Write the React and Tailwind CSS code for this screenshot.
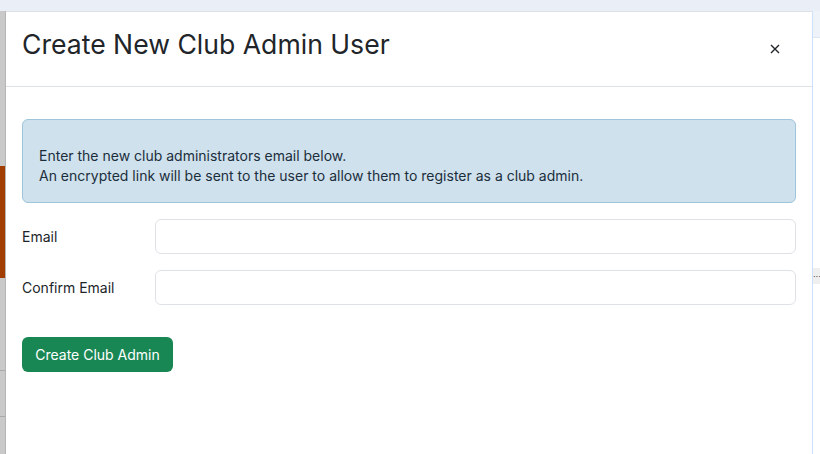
import React, { useState } from "react";

const CreateClubAdminModal = () => {
  const [email, setEmail] = useState("");
  const [confirmEmail, setConfirmEmail] = useState("");

  return (
    <div className="flex flex-col w-[820px] h-[454px] overflow-hidden bg-white font-['Inter','Liberation_Sans',sans-serif] text-[#212529]">
      {/* page behind the modal */}
      <div className="h-[11px] shrink-0 bg-[#e9eef7]" />

      <div className="flex flex-1 min-h-0">
        {/* left edge of the page */}
        <div className="flex flex-col w-[6px] shrink-0 bg-[#c9c9c9] border-r border-[#b5b5b5]">
          <div className="h-[155px] shrink-0" />
          <div className="h-[112px] shrink-0 bg-[#a23d02]" />
          <div className="h-[93px] shrink-0 border-b border-[#a9a9a9]" />
          <div className="h-[46px] shrink-0 border-b border-[#a9a9a9]" />
        </div>

        {/* Modal */}
        <div className="flex flex-col flex-1 bg-white border-t border-[#dee2e6]">
          <div className="flex items-center justify-between h-[75px] shrink-0 px-4 border-b border-[#dee2e6]">
            <h3 className="text-[26.6px] leading-[31px] mb-[10px] text-[#212529]">
              Create New Club Admin User
            </h3>
            <button className="flex items-center justify-center w-[20px] h-[20px] mr-[11px] text-[#212529]">
              <svg width="10" height="10" viewBox="0 0 10 10">
                <path d="M1 1 L9 9 M9 1 L1 9" stroke="currentColor" strokeWidth="1.4" />
              </svg>
            </button>
          </div>

          <div className="flex flex-col px-4 pt-[32px]">
            {/* Info box */}
            <div className="rounded-[6px] border border-[#9ec5da] bg-[#cfe1ec] px-4 pt-[26px] pb-[16px] text-[14px] leading-[20px] text-[#1b2e3c]">
              <p>Enter the new club administrators email below.</p>
              <p>An encrypted link will be sent to the user to allow them to register as a club admin.</p>
            </div>

            <div className="flex items-center mt-4">
              <label className="w-[133px] shrink-0 text-[14px]">Email</label>
              <input
                type="email"
                value={email}
                onChange={(e) => setEmail(e.target.value)}
                className="flex-1 h-[35px] rounded-[6px] border border-[#dee2e6] px-3 text-[14px] outline-none"
              />
            </div>

            <div className="flex items-center mt-4">
              <label className="w-[133px] shrink-0 text-[14px]">Confirm Email</label>
              <input
                type="email"
                value={confirmEmail}
                onChange={(e) => setConfirmEmail(e.target.value)}
                className="flex-1 h-[35px] rounded-[6px] border border-[#dee2e6] px-3 text-[14px] outline-none"
              />
            </div>

            <div className="mt-[32px]">
              <button className="h-[35px] w-[151px] rounded-[6px] bg-[#198754] text-white text-[14px]">
                Create Club Admin
              </button>
            </div>
          </div>
        </div>

        {/* right edge of the page */}
        <div className="flex flex-col w-[8px] shrink-0 border-l border-[#cfe0fb] bg-white">
          <div className="h-[27px] shrink-0 bg-[#eef2f9] border-b border-[#dde6f3]" />
          <div className="h-[230px] shrink-0" />
          <div className="h-[16px] shrink-0 flex items-center bg-[#efefef] text-[9px] leading-none text-[#555] overflow-hidden">
            ···
          </div>
        </div>
      </div>
    </div>
  );
};

export default function App() {
  return <CreateClubAdminModal />;
}
